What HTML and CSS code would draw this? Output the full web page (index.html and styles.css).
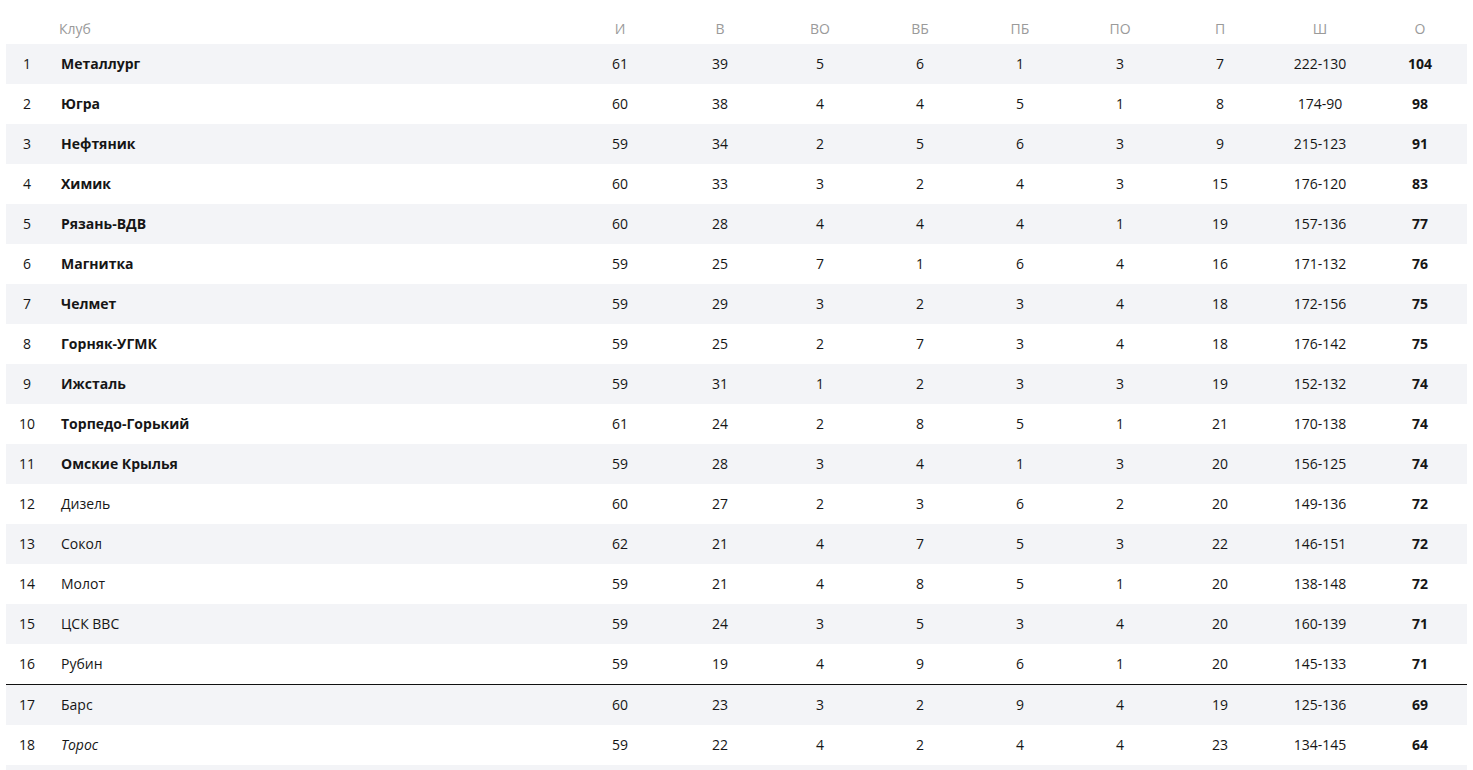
FILE: index.html
```html
<!DOCTYPE html>
<html lang="ru">
<head>
<meta charset="utf-8">
<title>Таблица</title>
<link rel="stylesheet" href="styles.css">
</head>
<body>
<div class="wrap">
<table class="standings">
<colgroup>
<col class="c-pos"><col class="c-club">
<col class="c-n"><col class="c-n"><col class="c-n"><col class="c-n"><col class="c-n"><col class="c-n"><col class="c-n"><col class="c-n"><col class="c-last">
</colgroup>
<thead>
<tr><th></th><th class="club">Клуб</th><th>И</th><th>В</th><th>ВО</th><th>ВБ</th><th>ПБ</th><th>ПО</th><th>П</th><th>Ш</th><th class="last">О</th></tr>
</thead>
<tbody>
<tr><td>1</td><td class="club b">Металлург</td><td>61</td><td>39</td><td>5</td><td>6</td><td>1</td><td>3</td><td>7</td><td>222-130</td><td class="pts">104</td></tr>
<tr><td>2</td><td class="club b">Югра</td><td>60</td><td>38</td><td>4</td><td>4</td><td>5</td><td>1</td><td>8</td><td>174-90</td><td class="pts">98</td></tr>
<tr><td>3</td><td class="club b">Нефтяник</td><td>59</td><td>34</td><td>2</td><td>5</td><td>6</td><td>3</td><td>9</td><td>215-123</td><td class="pts">91</td></tr>
<tr><td>4</td><td class="club b">Химик</td><td>60</td><td>33</td><td>3</td><td>2</td><td>4</td><td>3</td><td>15</td><td>176-120</td><td class="pts">83</td></tr>
<tr><td>5</td><td class="club b">Рязань-ВДВ</td><td>60</td><td>28</td><td>4</td><td>4</td><td>4</td><td>1</td><td>19</td><td>157-136</td><td class="pts">77</td></tr>
<tr><td>6</td><td class="club b">Магнитка</td><td>59</td><td>25</td><td>7</td><td>1</td><td>6</td><td>4</td><td>16</td><td>171-132</td><td class="pts">76</td></tr>
<tr><td>7</td><td class="club b">Челмет</td><td>59</td><td>29</td><td>3</td><td>2</td><td>3</td><td>4</td><td>18</td><td>172-156</td><td class="pts">75</td></tr>
<tr><td>8</td><td class="club b">Горняк-УГМК</td><td>59</td><td>25</td><td>2</td><td>7</td><td>3</td><td>4</td><td>18</td><td>176-142</td><td class="pts">75</td></tr>
<tr><td>9</td><td class="club b">Ижсталь</td><td>59</td><td>31</td><td>1</td><td>2</td><td>3</td><td>3</td><td>19</td><td>152-132</td><td class="pts">74</td></tr>
<tr><td>10</td><td class="club b">Торпедо-Горький</td><td>61</td><td>24</td><td>2</td><td>8</td><td>5</td><td>1</td><td>21</td><td>170-138</td><td class="pts">74</td></tr>
<tr><td>11</td><td class="club b">Омские Крылья</td><td>59</td><td>28</td><td>3</td><td>4</td><td>1</td><td>3</td><td>20</td><td>156-125</td><td class="pts">74</td></tr>
<tr><td>12</td><td class="club">Дизель</td><td>60</td><td>27</td><td>2</td><td>3</td><td>6</td><td>2</td><td>20</td><td>149-136</td><td class="pts">72</td></tr>
<tr><td>13</td><td class="club">Сокол</td><td>62</td><td>21</td><td>4</td><td>7</td><td>5</td><td>3</td><td>22</td><td>146-151</td><td class="pts">72</td></tr>
<tr><td>14</td><td class="club">Молот</td><td>59</td><td>21</td><td>4</td><td>8</td><td>5</td><td>1</td><td>20</td><td>138-148</td><td class="pts">72</td></tr>
<tr><td>15</td><td class="club">ЦСК ВВС</td><td>59</td><td>24</td><td>3</td><td>5</td><td>3</td><td>4</td><td>20</td><td>160-139</td><td class="pts">71</td></tr>
<tr class="cut"><td>16</td><td class="club">Рубин</td><td>59</td><td>19</td><td>4</td><td>9</td><td>6</td><td>1</td><td>20</td><td>145-133</td><td class="pts">71</td></tr>
<tr><td>17</td><td class="club">Барс</td><td>60</td><td>23</td><td>3</td><td>2</td><td>9</td><td>4</td><td>19</td><td>125-136</td><td class="pts">69</td></tr>
<tr><td>18</td><td class="club i">Торос</td><td>59</td><td>22</td><td>4</td><td>2</td><td>4</td><td>4</td><td>23</td><td>134-145</td><td class="pts">64</td></tr>
<tr class="empty"><td></td><td class="club"></td><td></td><td></td><td></td><td></td><td></td><td></td><td></td><td></td><td class="pts"></td></tr>
</tbody>
</table>
</div>
</body>
</html>
```
FILE: styles.css
```css
html, body {
  margin: 0;
  padding: 0;
  background: #ffffff;
}
body {
  font-family: "Open Sans", "Liberation Sans", sans-serif;
  font-size: 14px;
  color: #161616;
}
.wrap {
  padding: 12px 6px 0 6px;
}
.standings {
  width: 1461px;
  border-collapse: collapse;
  table-layout: fixed;
}
.c-pos { width: 42px; }
.c-club { width: auto; }
.c-n { width: 100px; }
.c-last { width: 97px; }
.standings th {
  height: 32px;
  padding: 0;
  font-weight: 400;
  color: #9a9a9a;
  text-align: center;
  vertical-align: middle;
}
.standings td {
  height: 39px;
  padding: 0 0 1px 0;
  text-align: center;
  vertical-align: middle;
}
.standings .club {
  text-align: left;
  padding-left: 13px;
}
.standings th.club {
  padding-left: 11px;
}
.standings .pts,
.standings th.last {
  padding-left: 3px;
}
.standings tbody tr:nth-child(odd) {
  background: #f3f4f7;
}
.standings .b { font-weight: 700; }
.standings .i { font-style: italic; }
.standings .pts { font-weight: 700; }
.standings tr.cut td {
  border-bottom: 1px solid #111;
}
```
